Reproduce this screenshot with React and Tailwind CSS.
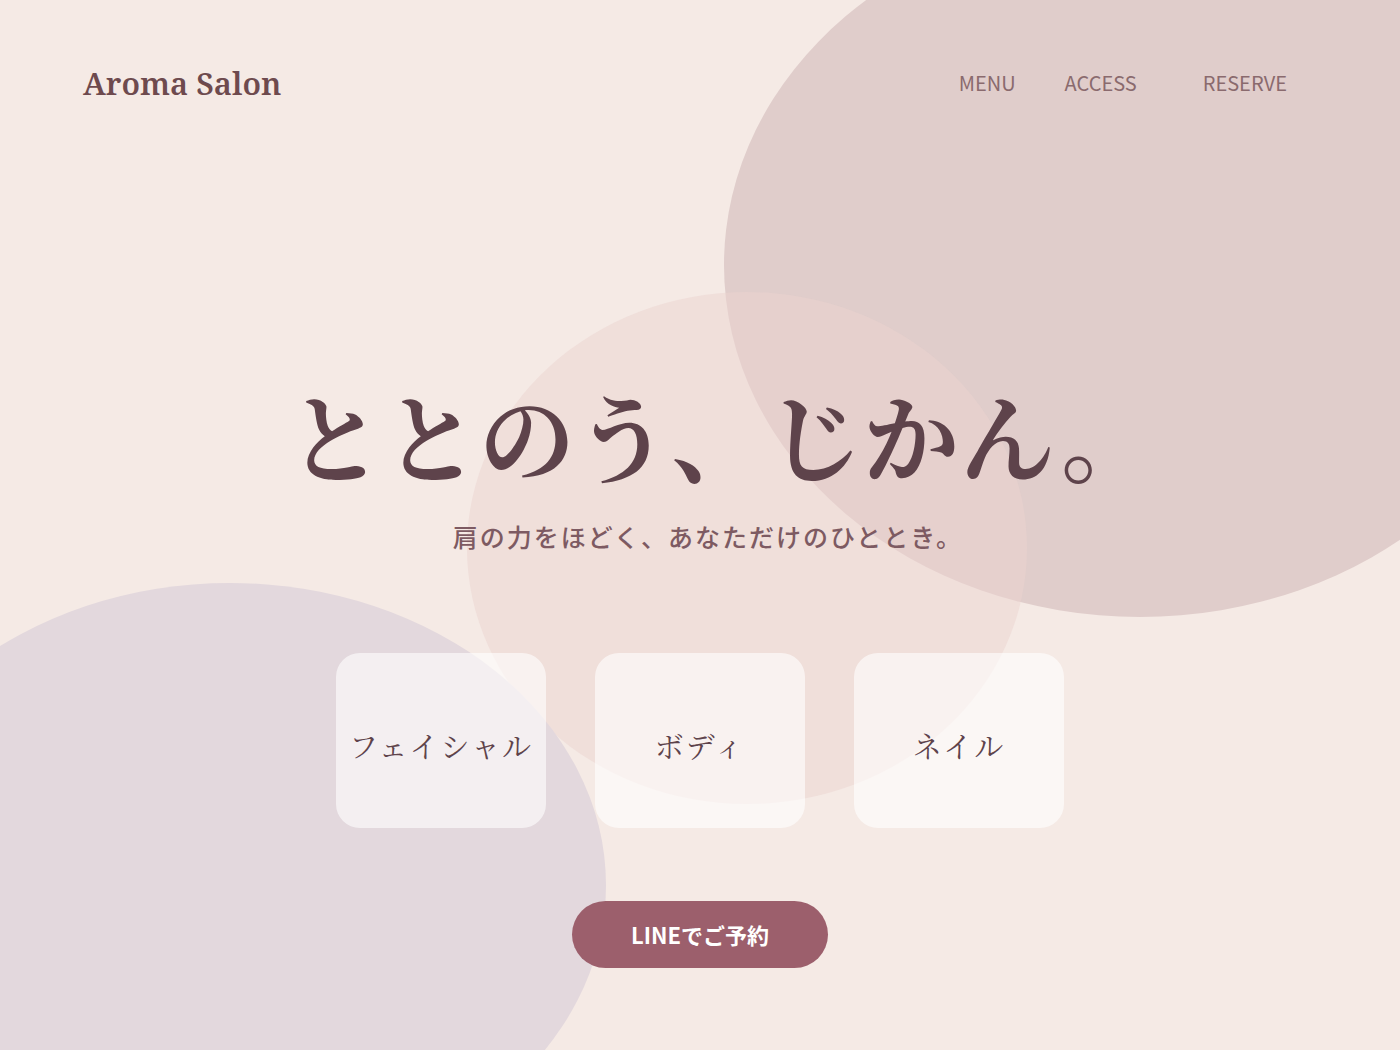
import React from 'react';

// 背景の装飾用の楕円（位置そのものがデザインなので absolute で配置）
const Blobs = () => (
  <>
    <div className="absolute left-[724px] top-[-87px] w-[832px] h-[704px] rounded-[50%] bg-[#e0cdcb]" />
    <div className="absolute left-[467px] top-[292px] w-[560px] h-[512px] rounded-[50%] bg-[#ebd3d0]/50" />
    <div className="absolute left-[-146px] top-[583px] w-[752px] h-[604px] rounded-[50%] bg-[#e3d8dd]" />
  </>
);

const MenuCard = ({ label }) => (
  <div className="w-[210px] h-[175px] rounded-[24px] bg-white/60 flex items-center justify-center pt-[12px]">
    <span className='text-[29px] tracking-[2px] text-[#5e434b] font-["Noto_Serif_CJK_JP","Liberation_Serif",serif]'>
      {label}
    </span>
  </div>
);

export default function App() {
  return (
    <div className="relative w-full h-[1050px] overflow-hidden bg-[#f5eae5]">
      <Blobs />

      <div className="relative flex flex-col h-full">
        {/* ヘッダー */}
        <header className="flex items-center justify-between h-[166px] pl-[83px] pr-[113px]">
          <div className='text-[31px] font-semibold text-[#6e4a4e] font-["Noto_Serif","Liberation_Serif",serif]'>
            Aroma Salon
          </div>
          <nav className='flex items-center text-[20px] text-[#8a6a6e] font-["Noto_Sans_CJK_JP","Noto_Sans",sans-serif]'>
            <a className="mr-[49px]">MENU</a>
            <a className="mr-[66px]">ACCESS</a>
            <a>RESERVE</a>
          </nav>
        </header>

        {/* メインビジュアル */}
        <main className="flex flex-col items-center">
          <h1 className='mt-[220px] pl-[44px] text-[96px] leading-none font-bold text-[#5e434b] font-["Noto_Serif_CJK_JP","Liberation_Serif",serif]'>
            ととのう、じかん。
          </h1>
          <p className='mt-[36px] pl-[16px] text-[25px] font-medium tracking-[2px] text-[#7d5a62] font-["Noto_Sans_CJK_JP",sans-serif]'>
            肩の力をほどく、あなただけのひととき。
          </p>

          <div className="mt-[97px] flex gap-[49px]">
            <MenuCard label="フェイシャル" />
            <MenuCard label="ボディ" />
            <MenuCard label="ネイル" />
          </div>

          <button className='mt-[73px] w-[256px] h-[67px] rounded-full bg-[#9c5f6c] text-white text-[22px] font-bold font-["Noto_Sans_CJK_JP","Noto_Sans",sans-serif]'>
            LINEでご予約
          </button>
        </main>
      </div>
    </div>
  );
}
